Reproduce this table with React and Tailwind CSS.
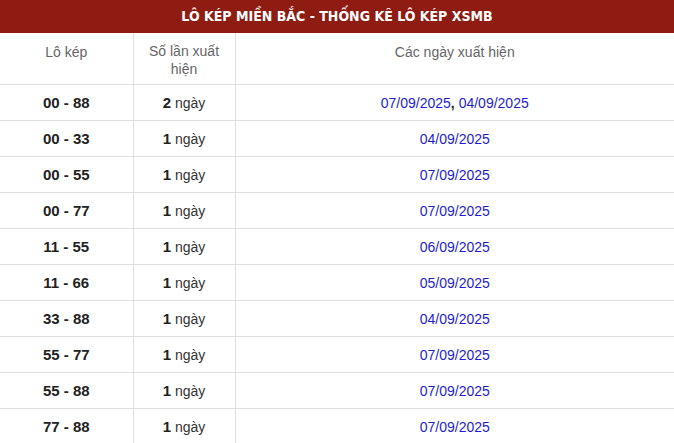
import React from "react";

const rows = [
  { pair: "00 - 88", count: 2, dates: ["07/09/2025", "04/09/2025"] },
  { pair: "00 - 33", count: 1, dates: ["04/09/2025"] },
  { pair: "00 - 55", count: 1, dates: ["07/09/2025"] },
  { pair: "00 - 77", count: 1, dates: ["07/09/2025"] },
  { pair: "11 - 55", count: 1, dates: ["06/09/2025"] },
  { pair: "11 - 66", count: 1, dates: ["05/09/2025"] },
  { pair: "33 - 88", count: 1, dates: ["04/09/2025"] },
  { pair: "55 - 77", count: 1, dates: ["07/09/2025"] },
  { pair: "55 - 88", count: 1, dates: ["07/09/2025"] },
  { pair: "77 - 88", count: 1, dates: ["07/09/2025"] },
];

export default function App() {
  return (
    <div className="w-[674px] bg-white font-['Liberation_Sans',Arial,sans-serif]">
      <div className="h-[33px] bg-[#8f1c13] flex items-center justify-center">
        <h2 className="text-white font-bold text-[14px] font-['Liberation_Sans_Narrow','DejaVu_Sans_Condensed',sans-serif]">
          LÔ KÉP MIỀN BẮC - THỐNG KÊ LÔ KÉP XSMB
        </h2>
      </div>
      <table className="w-full border-collapse table-fixed">
        <colgroup>
          <col className="w-[133px]" />
          <col className="w-[102px]" />
          <col />
        </colgroup>
        <thead>
          <tr className="h-[51px] border-b border-[#dedede] text-[#666] text-sm font-normal align-top">
            <th className="font-normal pt-[9px] leading-[20px] border-r border-[#dedede]">Lô kép</th>
            <th className="font-normal pt-[9px] leading-[18px] px-2 border-r border-[#dedede]">Số lần xuất hiện</th>
            <th className="font-normal pt-[9px] leading-[20px]">Các ngày xuất hiện</th>
          </tr>
        </thead>
        <tbody>
          {rows.map((r) => (
            <tr key={r.pair} className="h-[36px] border-b border-[#dedede]">
              <td className="pt-[2px] text-center font-bold text-[15px] text-[#222] border-r border-[#dedede]">{r.pair}</td>
              <td className="pt-[2px] text-center text-sm text-[#333] border-r border-[#dedede]">
                <b className="text-[15px] text-[#222]">{r.count}</b> ngày
              </td>
              <td className="pt-[2px] text-center text-sm text-[#1e1ed0]">
                {r.dates.map((d, i) => (
                  <React.Fragment key={d}>
                    {i > 0 && <b className="text-[#222]">, </b>}
                    {d}
                  </React.Fragment>
                ))}
              </td>
            </tr>
          ))}
        </tbody>
      </table>
    </div>
  );
}
